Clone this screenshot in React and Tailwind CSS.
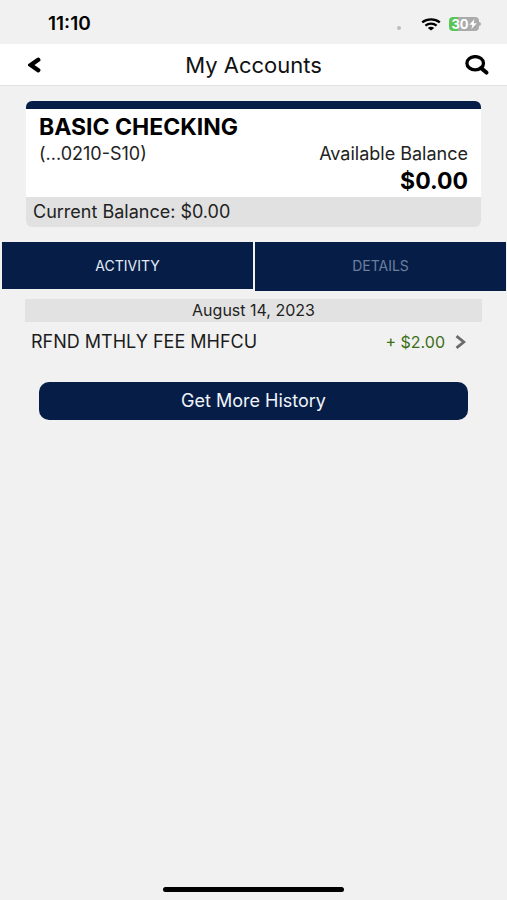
function StatusBar() {
  return (
    <div className="flex h-11 items-center justify-between pt-1 pr-[26px] pl-12">
      <span className="text-[19px] leading-5 font-semibold text-black">11:10</span>
      <div className="flex items-center">
        <span className="mt-2 mr-5 size-1 rounded-full bg-[#bdbdbd]" />
        <svg viewBox="0 0 20 13" className="mr-2 h-[13px] w-5" aria-label="Wi-Fi">
          <path d="M1.2 4.4C6.2 .4 13.8 .4 18.8 4.4" fill="none" stroke="#000" strokeWidth="2.4" />
          <path d="M4.4 7.6C7.6 5 12.4 5 15.6 7.6" fill="none" stroke="#000" strokeWidth="2.2" />
          <path d="M6.8 9.9C8.7 8.3 11.3 8.3 13.2 9.9L10 12.6Z" fill="#000" />
        </svg>
        <div className="flex items-center">
          <div className="flex h-[14px] w-[30px] items-center justify-center overflow-hidden rounded bg-linear-to-r from-[#5bc658] from-30% to-[#ababab] to-30% text-white">
            <span className="text-[13px] leading-[14px] font-bold">30</span>
            <svg viewBox="0 0 8 10" className="h-[10px] w-2" aria-hidden="true">
              <path d="M5.4 0L.4 5.8H3.4L2.4 10L7.8 4.2H4.7Z" fill="#fff" />
            </svg>
          </div>
          <span className="h-1 w-[2px] rounded-r-full bg-[#ababab]" />
        </div>
      </div>
    </div>
  );
}

function Header() {
  return (
    <header className="grid h-[42px] grid-cols-[1fr_auto_1fr] items-center border-b border-[#e2e2e2] bg-white px-[18px] pt-px">
      <button type="button" aria-label="Back" className="justify-self-start pl-[10px]">
        <svg viewBox="0 0 13 16" className="h-4 w-[13px]">
          <path d="M10.2 2.8L2.8 8L10.2 13.2" fill="none" stroke="#000" strokeWidth="4.4" strokeLinecap="round" />
        </svg>
      </button>
      <h1 className="text-[22px] leading-7 text-[#111]">My Accounts</h1>
      <button type="button" aria-label="Search" className="justify-self-end">
        <svg viewBox="0 0 24 20" className="h-5 w-6" fill="none" stroke="#000">
          <ellipse cx="10.2" cy="8.2" rx="8.3" ry="6.6" strokeWidth="3.3" />
          <path d="M16 13L21.4 17.6" strokeWidth="4" strokeLinecap="round" />
        </svg>
      </button>
    </header>
  );
}

function AccountCard() {
  return (
    <section className="mx-[26px] mt-[15px] overflow-hidden rounded-md border-t-8 border-[#061e47] bg-white">
      <div className="flex h-[88px] flex-col px-[13px] pt-1">
        <h2 className="text-[23px] leading-7 font-bold text-black">BASIC CHECKING</h2>
        <div className="flex justify-between text-[18px] leading-[26px] text-[#222]">
          <span>(...0210-S10)</span>
          <span>Available Balance</span>
        </div>
        <span className="self-end text-[23px] leading-7 font-bold text-black">$0.00</span>
      </div>
      <p className="h-[30px] bg-[#e1e1e1] px-[7px] text-[18px] leading-[30px] text-[#222]">
        Current Balance: $0.00
      </p>
    </section>
  );
}

export default function App() {
  return (
    <div className="flex min-h-screen flex-col bg-[#f1f1f1] font-['Inter','Liberation_Sans',sans-serif]">
      <StatusBar />
      <Header />
      <main className="flex-1">
        <AccountCard />
        <div role="tablist" className="mt-[15px] grid grid-cols-2 items-start gap-[2px] pr-px pl-[2px]">
          <button type="button" role="tab" aria-selected="true" className="h-[47px] bg-[#061e47] text-[14px] leading-5 text-[#e4ebf6]">
            ACTIVITY
          </button>
          <button type="button" role="tab" aria-selected="false" className="h-[49px] bg-[#061e47] pb-[2px] text-[14px] leading-5 text-[#6d7e9d]">
            DETAILS
          </button>
        </div>
        <section className="mx-[25px] mt-2">
          <h3 className="h-[23px] bg-[#e2e2e2] text-center text-[16px] leading-[23px] text-[#222]">August 14, 2023</h3>
          <button type="button" className="flex h-10 w-full items-center pr-4 pl-[6px] text-left">
            <span className="flex-1 text-[18px] leading-6 text-[#1c1c1c]">RFND MTHLY FEE MHFCU</span>
            <span className="text-[16px] leading-6 text-[#3c6e18]">+ $2.00</span>
            <svg viewBox="0 0 11 14" className="ml-[10px] h-[14px] w-[11px]" aria-hidden="true">
              <path d="M1.5 1.2L8.8 7L1.5 12.8" fill="none" stroke="#6a6a6a" strokeWidth="2.8" />
            </svg>
          </button>
        </section>
        <div className="mt-5 px-[39px]">
          <button type="button" className="h-[38px] w-full rounded-[10px] bg-[#061e47] text-[18px] leading-6 text-[#f1f4fa]">
            Get More History
          </button>
        </div>
      </main>
      <div className="mx-auto mb-2 h-[5px] w-[181px] rounded-full bg-black" />
    </div>
  );
}
